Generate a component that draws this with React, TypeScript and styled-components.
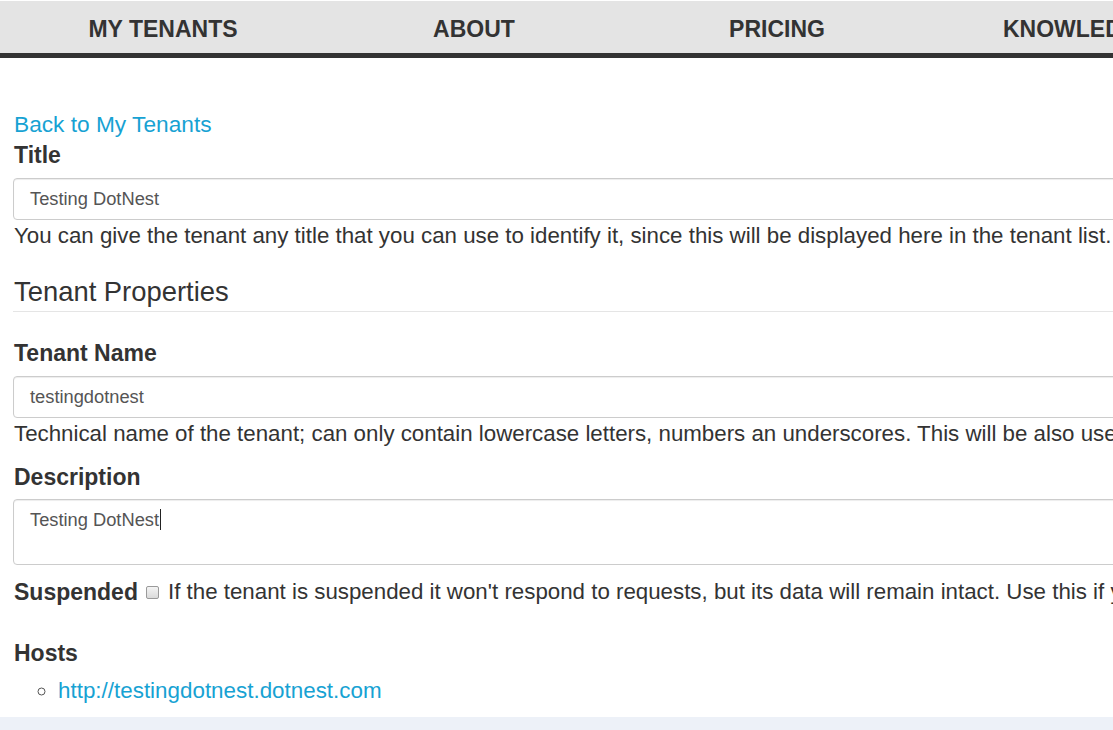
import React from "react";
import styled, { createGlobalStyle } from "styled-components";

const Global = createGlobalStyle`
  html, body {
    margin: 0;
    padding: 0;
    overflow: hidden;
    background: #ffffff;
  }
  body {
    font-family: "Liberation Sans", Arial, sans-serif;
    color: #333333;
  }
`;

const Page = styled.div`
  width: 1113px;
  height: 730px;
  overflow: hidden;
  display: flex;
  flex-direction: column;
`;

const Nav = styled.nav`
  margin-top: 1px;
  height: 52px;
  padding-top: 4px;
  box-sizing: border-box;
  background: #e4e4e4;
  border-bottom: 5px solid #333333;
  display: flex;
  align-items: flex-start;
  flex-shrink: 0;
  white-space: nowrap;
  box-sizing: content-box;
  height: 48px;
`;

const NavItem = styled.a<{ $w: number; $pad?: number }>`
  flex: 0 0 ${(p) => p.$w}px;
  text-align: ${(p) => (p.$pad ? "left" : "center")};
  padding-left: ${(p) => p.$pad ?? 0}px;
  box-sizing: border-box;
  font-size: 23px;
  font-weight: bold;
  color: #333333;
  text-decoration: none;
  line-height: 48px;
`;

const Main = styled.main`
  flex: 1;
  width: 1500px;
  padding: 53px 0 0 13px;
  box-sizing: border-box;
  display: flex;
  flex-direction: column;
  align-items: stretch;
`;

const BackLink = styled.a`
  align-self: flex-start;
  font-size: 22.7px;
  line-height: 26px;
  color: #17a2d3;
  text-decoration: none;
  padding-left: 1px;
`;

const Label = styled.label<{ $top: number }>`
  display: block;
  font-size: 23px;
  font-weight: bold;
  line-height: 26px;
  margin-top: ${(p) => p.$top}px;
  padding-left: 1px;
`;

const Input = styled.div<{ $area?: boolean; $top: number }>`
  margin-top: ${(p) => p.$top}px;
  height: ${(p) => (p.$area ? 66 : 42)}px;
  box-sizing: border-box;
  border: 1px solid #cccccc;
  border-radius: 4px;
  padding: ${(p) => (p.$area ? "8px" : "0")} 16px 0;
  display: flex;
  align-items: ${(p) => (p.$area ? "flex-start" : "center")};
  font-size: 18.3px;
  line-height: 24px;
  color: #555555;
  box-shadow: inset 0 1px 1px rgba(0, 0, 0, 0.075);
`;

const Caret = styled.span`
  display: inline-block;
  width: 1px;
  height: 21px;
  margin-top: 1px;
  background: #222;
  margin-left: 1px;
`;

const Help = styled.p`
  margin: 3px 0 0;
  font-size: 22.3px;
  line-height: 26px;
  padding-left: 1px;
  white-space: nowrap;
`;

const Heading = styled.h3`
  margin: 27px 0 0;
  font-size: 27.4px;
  font-weight: normal;
  line-height: 32px;
  padding: 0 0 3px 1px;
  border-bottom: 1px solid #e5e5e5;
`;

const CheckRow = styled.div`
  margin-top: 14px;
  display: flex;
  align-items: center;
  white-space: nowrap;
  font-size: 22.3px;
  line-height: 26px;
`;

const InlineLabel = styled.span`
  font-size: 23px;
  font-weight: bold;
  padding-left: 1px;
`;

const Check = styled.span`
  width: 11px;
  height: 11px;
  margin: 1px 9px 0 8px;
  border: 1px solid #9a9a9a;
  border-radius: 2px;
  background: linear-gradient(#f4f4f4, #dadada);
  flex-shrink: 0;
`;

const HostList = styled.ul`
  margin: 12px 0 0;
  padding-left: 45px;
  list-style: circle;
  font-size: 22.4px;
  line-height: 26px;
  color: #555;
`;

const HostLink = styled.a`
  color: #17a2d3;
  text-decoration: none;
`;

const Footer = styled.footer`
  height: 13px;
  background: #edf1f8;
  flex-shrink: 0;
`;

export default function App() {
  return (
    <Page>
      <Global />
      <Nav>
        <NavItem $w={326}>MY TENANTS</NavItem>
        <NavItem $w={296}>ABOUT</NavItem>
        <NavItem $w={310}>PRICING</NavItem>
        <NavItem $w={400} $pad={71}>KNOWLEDGE BASE</NavItem>
      </Nav>
      <Main>
        <BackLink href="#">Back to My Tenants</BackLink>
        <Label $top={5}>Title</Label>
        <Input $top={10}>Testing DotNest</Input>
        <Help>
          You can give the tenant any title that you can use to identify it, since this will be
          displayed here in the tenant list.
        </Help>
        <Heading>Tenant Properties</Heading>
        <Label $top={28}>Tenant Name</Label>
        <Input $top={10}>testingdotnest</Input>
        <Help>
          Technical name of the tenant; can only contain lowercase letters, numbers an underscores.
          This will be also used as the subdomain of the tenant.
        </Help>
        <Label $top={17}>Description</Label>
        <Input $top={9} $area>
          Testing DotNest
          <Caret />
        </Input>
        <CheckRow>
          <InlineLabel>Suspended</InlineLabel>
          <Check />
          If the tenant is suspended it won't respond to requests, but its data will remain
          intact. Use this if you want to temporarily disable the tenant.
        </CheckRow>
        <Label $top={35}>Hosts</Label>
        <HostList>
          <li>
            <HostLink href="#">http://testingdotnest.dotnest.com</HostLink>
          </li>
        </HostList>
      </Main>
      <Footer />
    </Page>
  );
}
